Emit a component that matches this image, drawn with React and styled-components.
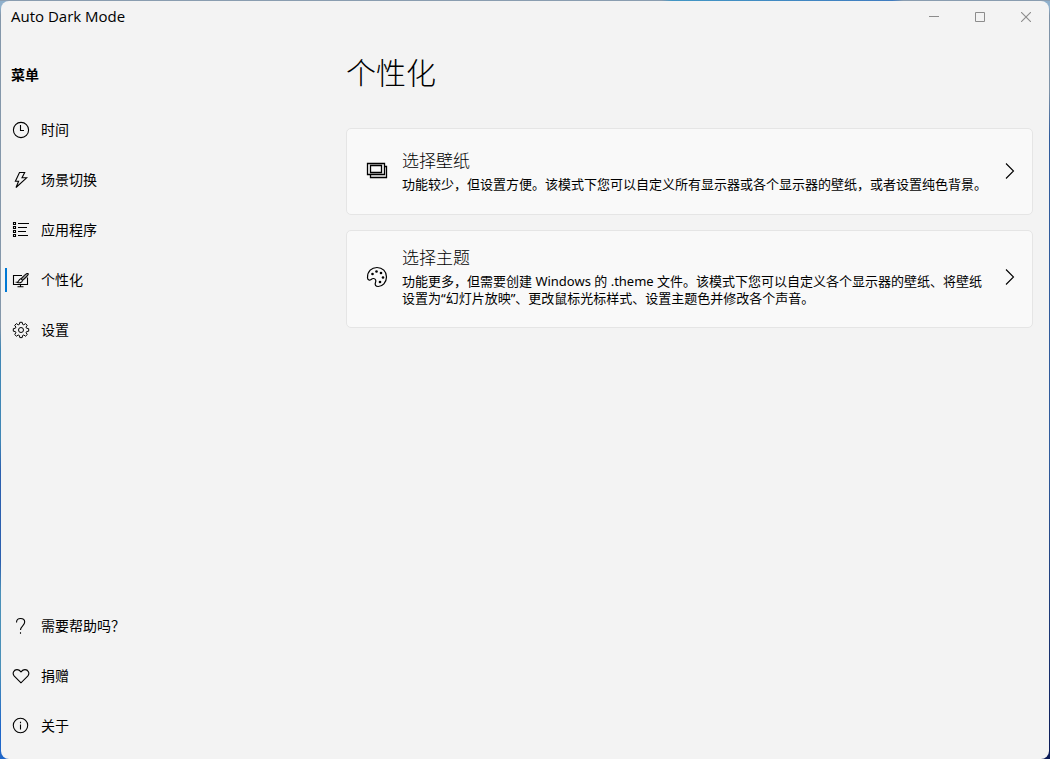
import React from 'react';
import styled, { createGlobalStyle } from 'styled-components';

const GlobalStyle = createGlobalStyle`
  * {
    box-sizing: border-box;
  }
  body {
    margin: 0;
    color: #000;
    font-family: 'Noto Sans', 'Noto Sans CJK SC', sans-serif;
    font-size: 14px;
  }
  button {
    font: inherit;
    color: inherit;
    border: 0;
    padding: 0;
    background: none;
  }
`;

const Desktop = styled.div`
  min-height: 100vh;
  padding: 1px 1px 0;
  display: flex;
  background:
    linear-gradient(90deg, #8a9db0 0 63%, #4296c4 64%, #3f7cc0 85%, #8a9db0 86%) top / 100% 1px no-repeat,
    linear-gradient(#8fb0cc 0 1%, #8497aa 2% 43%, #3f86b5 46% 58%, #2b5fae 62% 74%, #4a90b8 78% 88%, #1f66c8 96%) left / 50% 100% no-repeat,
    linear-gradient(#8fb0cc 0 1%, #7f93a8 2% 12%, #2f5b9c 18% 60%, #0a1a56) right / 50% 100% no-repeat;
`;
const Window = styled.div`
  flex: 1;
  display: flex;
  flex-direction: column;
  border-radius: 8px;
  background: #f3f3f3;
`;

const TitleBar = styled.header`
  display: flex;
  justify-content: space-between;
  height: 32px;
  padding-left: 10px;
  line-height: 30px;
`;
const AppName = styled.span`
  font-family: 'Open Sans', sans-serif;
  font-size: 15px;
`;
const Caption = styled.div`
  display: flex;
`;
const CaptionButton = styled.button`
  width: 46px;
  height: 32px;
  display: flex;
  align-items: center;
  justify-content: center;
  color: #8c8c8c;
`;

const Body = styled.div`
  flex: 1;
  display: flex;
`;
const Sidebar = styled.nav`
  width: 320px;
  flex-shrink: 0;
  display: flex;
  flex-direction: column;
  padding: 32px 0 8px 4px;
`;
const MenuHeading = styled.h2`
  margin: 0 0 20px 6px;
  font-size: 14px;
  line-height: 20px;
  font-weight: 700;
`;
const NavList = styled.ul`
  margin: 0;
  padding: 0;
  list-style: none;
`;
const BottomList = styled(NavList)`
  margin-top: auto;
`;
const NavLink = styled.a`
  height: 50px;
  display: flex;
  align-items: center;
  color: inherit;
  text-decoration: none;
  line-height: 20px;
`;
const Marker = styled.span`
  width: 2px;
  height: 24px;
  margin-right: 5px;
  background: ${({ $active }) => ($active ? '#0078d4' : 'transparent')};
`;
const NavIcon = styled.span`
  width: 29px;
  display: flex;
`;

const Content = styled.main`
  flex: 1;
  min-width: 0;
  padding: 19px 16px 20px 25px;
`;
const PageTitle = styled.h1`
  margin: 0 0 34px;
  font-size: 30px;
  line-height: 42px;
  font-weight: 300;
`;
const Cards = styled.div`
  display: flex;
  flex-direction: column;
  gap: 15px;
`;
const Card = styled.button`
  width: 100%;
  display: flex;
  align-items: center;
  padding: ${({ $compact }) => ($compact ? '15px 8px 20px 19px' : '20px 8px 21px 19px')};
  border: 1px solid #e5e5e5;
  border-radius: 5px;
  background: #f9f9f9;
  text-align: left;
`;
const CardIcon = styled.span`
  width: 36px;
  flex-shrink: 0;
  display: flex;
`;
const CardText = styled.span`
  flex: 1;
  min-width: 0;
  padding-right: 8px;
`;
const CardTitle = styled.span`
  display: block;
  margin-bottom: 3px;
  font-size: 17px;
  line-height: 24px;
  font-weight: 300;
`;
const CardNote = styled.span`
  display: block;
  font-size: 13px;
  line-height: 17px;
`;
const CardArrow = styled.span`
  width: 28px;
  flex-shrink: 0;
  display: flex;
  justify-content: center;
`;

const Icon = ({ size = 18, width = 1.1, children }) => (
  <svg
    width={size}
    height={size}
    viewBox={`0 0 ${size} ${size}`}
    fill="none"
    stroke="currentColor"
    strokeWidth={width}
    aria-hidden="true"
  >
    {children}
  </svg>
);

const icons = {
  clock: (
    <Icon>
      <circle cx="9" cy="9" r="7.6" />
      <path d="M8.5 4v5.5H12" />
    </Icon>
  ),
  bolt: (
    <Icon>
      <path d="M7.5 1.5h5.2L10 6.8h4.6L4 16.5l2.6-6.200H3.400z" />
    </Icon>
  ),
  list: (
    <Icon>
      <path d="M1.5 1.5h2v2h-2zM1.5 5.5h2v2h-2zM1.5 9.5h2v2h-2zM1.5 13.5h2v2h-2z" />
      <path d="M6 2.5h11M6 6.5h9M6 10.5h8M6 14.5h10" />
    </Icon>
  ),
  brush: (
    <Icon>
      <path d="M10 4.5H1.5v9h14V6.5M8.5 13.5v2M5.5 15.7h6" />
      <path d="M16.2 2.6c-1.5-.9-4.7 2.2-7.2 5.2l1.6 1.5c3.100-2.700 6.600-5.400 5.600-6.700z" fill="#999" />
      <path d="M9 7.8c-1.900.2-2 1.500-2.500 2.500-.4.600-.9.900-1.600 1 2.500 1 5.400.5 5.600-2.100" />
    </Icon>
  ),
  gear: (
    <Icon width={1}>
      <circle cx="9" cy="9" r="2.5" />
      <path d="M7.800 1.300h2.400l.4 2 1.200.5 1.700-1.200 1.700 1.700-1.200 1.800.5 1.100 2.200.5v2.500l-2.100.4-.5 1.200 1.200 1.700-1.800 1.700-1.700-1.200-1.200.5-.4 2.100H7.800l-.4-2.100-1.200-.5-1.800 1.200-1.700-1.700 1.200-1.700-.5-1.200-2.100-.4V7.700l2.100-.5.5-1.100-1.200-1.800 1.700-1.700 1.800 1.200 1.200-.5z" />
    </Icon>
  ),
  help: (
    <Icon>
      <path d="M4.5 5.5c0-2.700 1.700-4 4-4s4.200 1.400 4.200 3.600c0 3.600-4.200 3.900-4.200 8M8.500 15.200v1.500" />
    </Icon>
  ),
  heart: (
    <Icon>
      <path d="M9 15.800 2.300 9.100C-.3 6 2.100 2.600 5 2.600c1.700 0 2.900.9 4 2.200 1.100-1.300 2.300-2.200 4-2.200 2.900 0 5.300 3.400 2.700 6.500z" />
    </Icon>
  ),
  info: (
    <Icon>
      <circle cx="8.5" cy="8.5" r="7.2" />
      <path d="M8.5 7.5v5M8.5 4.800v1.400" />
    </Icon>
  ),
};

const WallpaperIcon = () => (
  <Icon size={22} width={1.3}>
    <path d="M1.5 3.5h17v11h-17zM4.5 5.500h11v7h-11z" />
    <path d="M18.5 6.500h2v11h-16v-3" />
  </Icon>
);

const PaletteIcon = () => (
  <Icon size={22} width={1.2}>
    <path d="M1.5 11.700C1.300 5.300 5.700 1.500 11 1.500c5.500 0 9.500 4 9.500 9.500s-4.200 9.500-8.300 9.500c-2.500 0-3.700-1.800-2.700-4 .9-2-.1-4.200-2.200-4-2.200.2-2.600 2.300-4.400 1.500-1-.4-1.400-1.300-1.400-2.300z" />
    <g fill="currentColor" stroke="none">
      <circle cx="6.5" cy="8" r="1.3" />
      <circle cx="10.5" cy="5.5" r="1.3" />
      <circle cx="15" cy="7" r="1.3" />
      <circle cx="17" cy="11.5" r="1.3" />
      <circle cx="14" cy="16" r="1.3" />
    </g>
  </Icon>
);

const menu = [
  { name: '时间', icon: 'clock' },
  { name: '场景切换', icon: 'bolt' },
  { name: '应用程序', icon: 'list' },
  { name: '个性化', icon: 'brush', active: true },
  { name: '设置', icon: 'gear' },
];

const footer = [
  { name: '需要帮助吗？', icon: 'help' },
  { name: '捐赠', icon: 'heart' },
  { name: '关于', icon: 'info' },
];

const NavItem = ({ name, icon, active }) => (
  <li>
    <NavLink href={`#${icon}`} aria-current={active ? 'page' : undefined}>
      <Marker $active={active} />
      <NavIcon>{icons[icon]}</NavIcon>
      {name}
    </NavLink>
  </li>
);

const OptionCard = ({ icon, title, note, compact }) => (
  <Card type="button" $compact={compact}>
    <CardIcon>{icon}</CardIcon>
    <CardText>
      <CardTitle>{title}</CardTitle>
      <CardNote>{note}</CardNote>
    </CardText>
    <CardArrow>
      <Icon>
        <path d="M5 1.5 12.5 9 5 16.5" />
      </Icon>
    </CardArrow>
  </Card>
);

const App = () => (
  <Desktop>
    <GlobalStyle />
    <Window>
      <TitleBar>
        <AppName>Auto Dark Mode</AppName>
        <Caption>
          <CaptionButton type="button" aria-label="最小化">
            <Icon size={10} width={1}><path d="M0 4.5h10" /></Icon>
          </CaptionButton>
          <CaptionButton type="button" aria-label="最大化">
            <Icon size={10} width={1}><path d="M.5.5h9v9h-9z" /></Icon>
          </CaptionButton>
          <CaptionButton type="button" aria-label="关闭">
            <Icon size={10}><path d="m0 0 10 10M10 0 0 10" /></Icon>
          </CaptionButton>
        </Caption>
      </TitleBar>
      <Body>
        <Sidebar>
          <MenuHeading>菜单</MenuHeading>
          <NavList>
            {menu.map(item => <NavItem key={item.icon} {...item} />)}
          </NavList>
          <BottomList>
            {footer.map(item => <NavItem key={item.icon} {...item} />)}
          </BottomList>
        </Sidebar>
        <Content>
          <PageTitle>个性化</PageTitle>
          <Cards>
            <OptionCard
              icon={<WallpaperIcon />}
              title="选择壁纸"
              note="功能较少，但设置方便。该模式下您可以自定义所有显示器或各个显示器的壁纸，或者设置纯色背景。"
            />
            <OptionCard
              compact
              icon={<PaletteIcon />}
              title="选择主题"
              note="功能更多，但需要创建 Windows 的 .theme 文件。该模式下您可以自定义各个显示器的壁纸、将壁纸设置为“幻灯片放映”、更改鼠标光标样式、设置主题色并修改各个声音。"
            />
          </Cards>
        </Content>
      </Body>
    </Window>
  </Desktop>
);

export default App;
